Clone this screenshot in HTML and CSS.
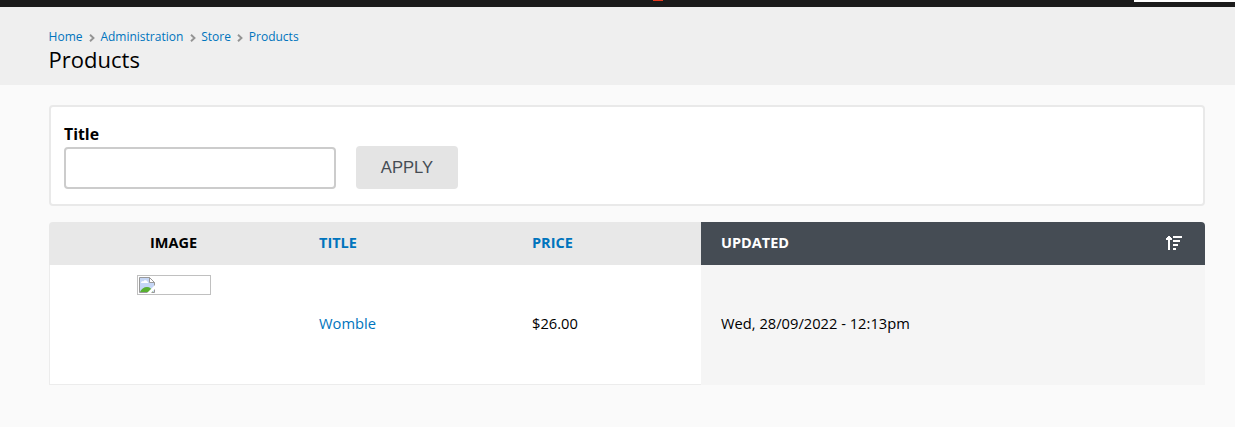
FILE: index.html
```html
<!DOCTYPE html>
<html lang="en">
<head>
    <meta charset="UTF-8">
    <meta name="viewport" content="width=device-width, initial-scale=1.0">
    <title>Products</title>
    <link rel="stylesheet" href="styles.css">
</head>
<body>
    <div id="toolbar">
        <span class="toolbar-badge"></span>
        <span class="toolbar-search"></span>
    </div>

    <header id="branding">
        <nav class="breadcrumb">
            <a href="#">Home</a>
            <svg class="sep" viewBox="0 0 6 8"><path d="M1 .7l3.500 3.300L1 7.300"/></svg>
            <a href="#">Administration</a>
            <svg class="sep" viewBox="0 0 6 8"><path d="M1 .7l3.500 3.300L1 7.300"/></svg>
            <a href="#">Store</a>
            <svg class="sep" viewBox="0 0 6 8"><path d="M1 .7l3.500 3.300L1 7.300"/></svg>
            <a href="#">Products</a>
        </nav>
        <h1 class="page-title">Products</h1>
    </header>

    <main id="page">
        <form class="filters">
            <div class="form-item">
                <label for="edit-title">Title</label>
                <input type="text" id="edit-title" name="title">
            </div>
            <button type="button" class="form-submit">APPLY</button>
        </form>

        <table class="views-table">
            <colgroup>
                <col class="col-image">
                <col class="col-title">
                <col class="col-price">
                <col class="col-updated">
            </colgroup>
            <thead>
                <tr>
                    <th class="image">IMAGE</th>
                    <th><a href="#">TITLE</a></th>
                    <th><a href="#">PRICE</a></th>
                    <th class="active">
                        <a href="#">UPDATED
                            <svg class="sort" viewBox="0 0 16 14" shape-rendering="crispEdges">
                                <path d="M2 4h2v10H2zM2 0h2v1H2zM1 1h4v1H1zM0 2h6v2H0zM7 0h9v2H7zM7 4h7v2H7zM7 8h5v2H7zM7 12h3v2H7z"/>
                            </svg>
                        </a>
                    </th>
                </tr>
            </thead>
            <tbody>
                <tr>
                    <td class="image">
                        <span class="missing-image">
                            <svg viewBox="0 0 16 16">
                                <path d="M.5.5h10l5 5v10H.5z" fill="#c5d6f5"/>
                                <path d="M2 6c0-2 2-2 2.500-1.500C5 2.500 8 3 8 4.500c1.500 0 1.500 1.500 1 1.500z" fill="#fff"/>
                                <path d="M1 15c1-3 4-5 7-5 3 0 5 2 6 5z" fill="#58b030"/>
                                <path d="M.5 15.500V.5h10l5 5v10z" fill="none" stroke="#999"/>
                                <path d="M10.500.5v5h5z" fill="#fff" stroke="#999"/>
                                <path d="M8 16l8-8v4l-4 4z" fill="#fff"/>
                            </svg>
                        </span>
                    </td>
                    <td><a href="#">Womble</a></td>
                    <td>$26.00</td>
                    <td class="active">Wed, 28/09/2022 - 12:13pm</td>
                </tr>
            </tbody>
        </table>
    </main>
</body>
</html>
```
FILE: styles.css
```css
* {
    box-sizing: border-box;
}

body {
    margin: 0;
    background: #fafafa;
    color: #000;
    font-family: "Open Sans", "Noto Sans", sans-serif;
    font-size: 14.7px;
}

a {
    color: #0074bd;
    text-decoration: none;
}

/* Toolbar */
#toolbar {
    position: relative;
    height: 7px;
    background: #1b1b1b;
    overflow: hidden;
}

.toolbar-badge {
    position: absolute;
    left: 653px;
    top: 0;
    width: 10px;
    height: 1px;
    background: #e8391e;
}

.toolbar-search {
    position: absolute;
    right: 0;
    top: 0;
    width: 101px;
    height: 2px;
    background: #fff;
}

/* Header */
#branding {
    height: 78px;
    padding: 20px 48.6px 0;
    background: #efefef;
}

.breadcrumb {
    display: flex;
    align-items: center;
    height: 18px;
    font-size: 12px;
}

.sep {
    width: 6px;
    height: 8px;
    margin: 3px 5.5px 0 6.4px;
    fill: none;
    stroke: #949494;
    stroke-width: 1.9;
}

.page-title {
    margin: 0;
    font-size: 22px;
    font-weight: normal;
    line-height: 28px;
}

#page {
    padding: 20px 30px 0 49px;
}

/* Filter form */
.filters {
    display: flex;
    align-items: flex-end;
    gap: 20px;
    height: 101px;
    padding: 0 13px 15px;
    margin-bottom: 16px;
    background: #fff;
    border: 2px solid #e9e9e9;
    border-radius: 4px;
}

.form-item label {
    display: block;
    font-size: 15.8px;
    font-weight: bold;
    line-height: 26px;
}

.form-item input {
    display: block;
    width: 272px;
    height: 42px;
    background: #fff;
    border: 2px solid #ccc;
    border-radius: 4px;
}

.form-submit {
    width: 102px;
    height: 43px;
    padding: 0;
    background: #e4e4e4;
    border: none;
    border-radius: 4px;
    color: #454c54;
    font-family: "Liberation Sans", Arial, sans-serif;
    font-size: 16.6px;
}

/* Listing */
.views-table {
    width: 1156px;
    table-layout: fixed;
    border-spacing: 0;
}

.col-image {
    width: 250px;
}

.col-title {
    width: 213px;
}

.col-price {
    width: 189px;
}

th,
td {
    padding: 0 20px 2px;
    text-align: left;
}

th {
    height: 43px;
    background: #e8e8e8;
    font-size: 14.5px;
}

th:first-child {
    border-top-left-radius: 4px;
}

th.active {
    background: #454c54;
    border-top-right-radius: 4px;
}

th.active a {
    display: flex;
    align-items: center;
    justify-content: space-between;
    color: #fff;
}

.sort {
    width: 16px;
    height: 14px;
    margin-right: 3px;
    fill: #fff;
}

td {
    height: 120px;
    padding-bottom: 4px;
    background: #fff;
    border-bottom: 1px solid #ececec;
}

td:first-child {
    border-left: 1px solid #ececec;
}

td.active {
    background: #f5f5f5;
    border-color: #f5f5f5;
}

th.image,
td.image {
    padding-right: 21px;
    text-align: center;
}

td.image {
    padding-top: 10px;
    vertical-align: top;
}

.missing-image {
    display: block;
    width: 74px;
    height: 20px;
    margin: 0 auto;
    padding: 1px;
    border: 1px solid #c0c0c0;
}

.missing-image svg {
    display: block;
    width: 16px;
    height: 16px;
}
```
